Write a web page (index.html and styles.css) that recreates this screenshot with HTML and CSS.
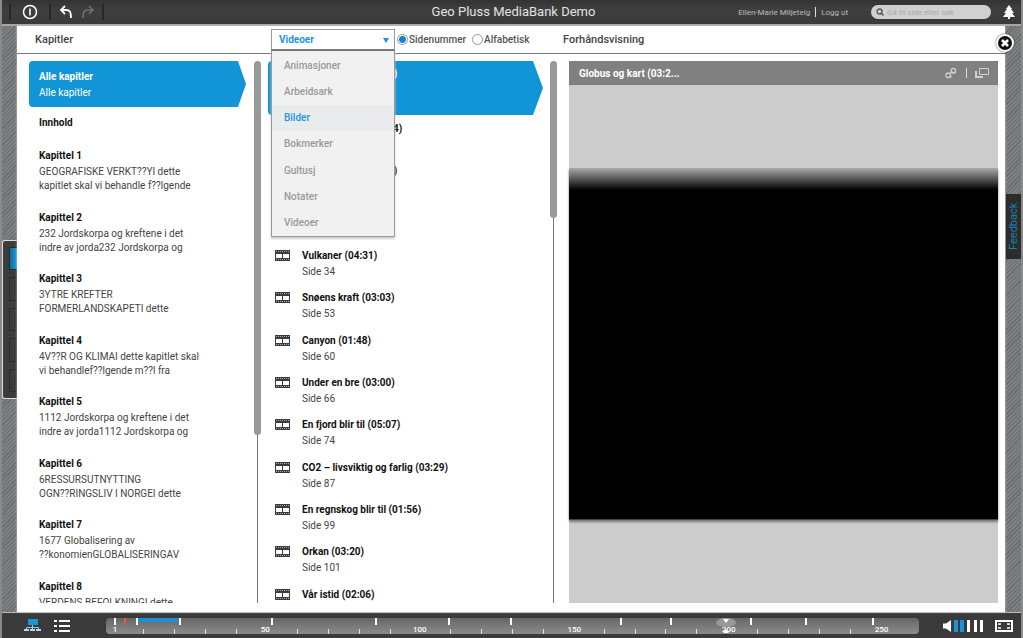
FILE: index.html
```html
<!DOCTYPE html>
<html lang="no">
<head>
<meta charset="utf-8">
<title>Geo Pluss MediaBank Demo</title>
<link rel="stylesheet" href="styles.css">
</head>
<body>
<svg class="defs" width="0" height="0" aria-hidden="true">
  <symbol id="film" viewBox="0 0 15 11">
    <path fill="#3c3c3c" fill-rule="evenodd" d="M0 0h15v11H0zM1 4v4h6V4zM8 4v4h6V4z"/>
    <path fill="#aaa" d="M1 1h1v1H1zM3 1h1v1H3zM5 1h1v1H5zM7 1h1v1H7zM9 1h1v1H9zM11 1h1v1h-1zM13 1h1v1h-1zM1 9h1v1H1zM3 9h1v1H3zM5 9h1v1H5zM7 9h1v1H7zM9 9h1v1H9zM11 9h1v1h-1zM13 9h1v1h-1z"/>
  </symbol>
</svg>
<div class="app">
  <header class="topbar">
    <div class="tools">
      <i class="sep"></i>
      <button class="icon-btn info" aria-label="Info"><svg width="16" height="16" viewBox="0 0 16 16" fill="none" stroke="#fff"><circle cx="8" cy="8" r="6.5" stroke-width="1.5"/><path d="M8 4.5v7" stroke-width="1.6"/></svg></button>
      <i class="sep"></i>
      <button class="icon-btn" aria-label="Angre"><svg width="14" height="14" viewBox="0 0 14 14" fill="none" stroke="#fff" stroke-width="1.8"><path d="M6 1 2 5l4 4M2 5h5c4 0 5 2 5 8"/></svg></button>
      <button class="icon-btn redo" aria-label="Gjenta"><svg width="14" height="14" viewBox="0 0 14 14" fill="none" stroke="#727272" stroke-width="1.5"><path d="m8 1 4 4-4 4M12 5H7c-4 0-5 2-5 8"/></svg></button>
      <i class="sep"></i>
    </div>
    <h1>Geo Pluss MediaBank Demo</h1>
    <div class="account">
      <span>Ellen-Marie Miljeteig</span><i class="bar"></i><a href="#">Logg ut</a>
      <label class="search"><svg width="8" height="8" viewBox="0 0 8 8" fill="none" stroke="#555"><circle cx="3.5" cy="3.5" r="2.5" stroke-width="1.4"/><path d="m5.5 5.5 2 2" stroke-width="1.5"/></svg><input type="text" placeholder="Gå til side eller søk" aria-label="Søk"></label>
      <svg class="tree" width="12" height="14" viewBox="0 0 12 14" fill="#fff"><path d="m6 0 3 4H8l3 4H9l3 4H7v2H5v-2H0l3-4H1l3-4H3z"/></svg>
    </div>
  </header>

  <main class="stage">
    <div class="rail"><i class="slot on"></i><i class="slot"></i><i class="slot"></i><i class="slot"></i><i class="slot"></i></div>
    <section class="dialog">
      <div class="head">
        <h2 class="h-left">Kapitler</h2>
        <div class="filters">
          <div class="picker">
            <select aria-label="Medietype"><option>Videoer</option></select>
            <i class="caret"></i>
            <ul class="menu">
              <li><button>Animasjoner</button></li>
              <li><button>Arbeidsark</button></li>
              <li><button class="active">Bilder</button></li>
              <li><button>Bokmerker</button></li>
              <li><button>Gultusj</button></li>
              <li><button>Notater</button></li>
              <li><button>Videoer</button></li>
            </ul>
          </div>
          <label class="sort"><input type="radio" name="sort" checked>Sidenummer</label>
          <label class="sort"><input type="radio" name="sort">Alfabetisk</label>
        </div>
        <h2 class="h-right">Forhåndsvisning</h2>
      </div>

      <div class="cols">
        <div class="col chapters-col">
          <div class="chapters">
            <article class="pick"><h3>Alle kapitler</h3><p>Alle kapitler</p></article>
            <article class="intro"><h3>Innhold</h3></article>
            <article><h3>Kapittel 1</h3><p>GEOGRAFISKE VERKT??YI dette<br>kapitlet skal vi behandle f??lgende</p></article>
            <article><h3>Kapittel 2</h3><p>232 Jordskorpa og kreftene i det<br>indre av jorda232 Jordskorpa og</p></article>
            <article><h3>Kapittel 3</h3><p>3YTRE KREFTER<br>FORMERLANDSKAPETI dette</p></article>
            <article><h3>Kapittel 4</h3><p>4V??R OG KLIMAI dette kapitlet skal<br>vi behandlef??lgende m??l fra</p></article>
            <article><h3>Kapittel 5</h3><p>1112 Jordskorpa og kreftene i det<br>indre av jorda1112 Jordskorpa og</p></article>
            <article><h3>Kapittel 6</h3><p>6RESSURSUTNYTTING<br>OGN??RINGSLIV I NORGEI dette</p></article>
            <article><h3>Kapittel 7</h3><p>1677 Globalisering av<br>??konomienGLOBALISERINGAV</p></article>
            <article><h3>Kapittel 8</h3><p>VERDENS BEFOLKNINGI dette</p></article>
          </div>
          <div class="scroll"><i class="thumb thumb-long"></i></div>
        </div>

        <div class="col videos-col">
          <div class="videos">
            <article class="pick"><svg width="15" height="11"><use href="#film"/></svg><div><h3>Globus og kart (03:2)</h3></div></article>
            <article><svg width="15" height="11"><use href="#film"/></svg><div><h3>Kontinentenes (03:04)</h3></div></article>
            <article><svg width="15" height="11"><use href="#film"/></svg><div><h3>Jordskjelv nå (02:30)</h3></div></article>
            <article><svg width="15" height="11"><use href="#film"/></svg><div><h3>Platene</h3></div></article>
            <article><svg width="15" height="11"><use href="#film"/></svg><div><h3>Vulkaner (04:31)</h3><p>Side 34</p></div></article>
            <article><svg width="15" height="11"><use href="#film"/></svg><div><h3>Snøens kraft (03:03)</h3><p>Side 53</p></div></article>
            <article><svg width="15" height="11"><use href="#film"/></svg><div><h3>Canyon (01:48)</h3><p>Side 60</p></div></article>
            <article><svg width="15" height="11"><use href="#film"/></svg><div><h3>Under en bre (03:00)</h3><p>Side 66</p></div></article>
            <article><svg width="15" height="11"><use href="#film"/></svg><div><h3>En fjord blir til (05:07)</h3><p>Side 74</p></div></article>
            <article><svg width="15" height="11"><use href="#film"/></svg><div><h3>CO2 – livsviktig og farlig (03:29)</h3><p>Side 87</p></div></article>
            <article><svg width="15" height="11"><use href="#film"/></svg><div><h3>En regnskog blir til (01:56)</h3><p>Side 99</p></div></article>
            <article><svg width="15" height="11"><use href="#film"/></svg><div><h3>Orkan (03:20)</h3><p>Side 101</p></div></article>
            <article><svg width="15" height="11"><use href="#film"/></svg><div><h3>Vår istid (02:06)</h3></div></article>
          </div>
          <div class="scroll"><i class="thumb thumb-short"></i></div>
        </div>

        <div class="preview">
          <div class="preview-head">
            <h3>Globus og kart (03:2...</h3>
            <button class="icon-btn" aria-label="Lenke"><svg width="12" height="12" viewBox="0 0 12 12" fill="none" stroke="#d0d0d0" stroke-width="1.3"><circle cx="3.2" cy="8.3" r="2.3"/><circle cx="8.3" cy="3.7" r="2.3"/><path d="m4.5 7 3-2.5M5 10.500l1.500-1.500M9 6.500l1.500-1"/></svg></button>
            <i class="bar"></i>
            <button class="icon-btn" aria-label="Åpne i vindu"><svg width="14" height="10" viewBox="0 0 14 10" fill="none" stroke="#d0d0d0"><path d="M4.500.5h9v6h-9z"/><path d="M1 3v6h7" stroke-width="2"/></svg></button>
          </div>
          <div class="screen"><div class="video"></div></div>
        </div>
      </div>
      <button class="close" aria-label="Lukk"><svg width="8" height="8" viewBox="0 0 8 8" stroke="#fff" stroke-width="2.600"><path d="m1 1 6 6M7 1 1 7"/></svg></button>
    </section>
    <button class="feedback">Feedback</button>
  </main>

  <footer class="bottombar">
    <button class="icon-btn" aria-label="Struktur"><svg width="17" height="13" viewBox="0 0 17 13"><path fill="#1996d8" d="M4 0h10v6H4z"/><path fill="none" stroke="#9ccbe6" d="M8.500 6v5M2.500 11V8.500h12V11"/><path fill="#b4d8ec" d="M0 10h5v2H0zM6 10h5v2H6zM12 10h5v2h-5z"/></svg></button>
    <button class="icon-btn list" aria-label="Liste"><svg width="16" height="12" viewBox="0 0 16 12" fill="#fff"><path d="M0 0h3v2H0zM5 0h11v2H5zM0 5h3v2H0zM5 5h11v2H5zM0 10h3v2H0zM5 10h11v2H5z"/></svg></button>
    <div class="timeline">
      <i class="range" style="left:3.7%;width:5.3%"></i>
      <i class="mark" style="left:1%"></i><i class="mark here" style="left:2.2%"></i>
      <i class="mark" style="left:3.7%"></i><i class="mark" style="left:9%"></i><i class="mark" style="left:20.3%"></i><i class="mark" style="left:33.1%"></i><i class="mark" style="left:42.1%"></i><i class="mark" style="left:49.7%"></i><i class="mark" style="left:63.2%"></i><i class="mark" style="left:69.4%"></i><i class="mark" style="left:79.2%"></i><i class="mark" style="left:86%"></i><i class="mark" style="left:94.2%"></i>
      <i class="tick" style="left:4.6%"></i><i class="tick" style="left:8.4%"></i><i class="tick" style="left:12.2%"></i><i class="tick" style="left:16%"></i>
      <i class="tick" style="left:23.5%"></i><i class="tick" style="left:27.3%"></i><i class="tick" style="left:31.1%"></i><i class="tick" style="left:34.9%"></i>
      <i class="tick" style="left:42.3%"></i><i class="tick" style="left:46.1%"></i><i class="tick" style="left:49.9%"></i><i class="tick" style="left:53.7%"></i>
      <i class="tick" style="left:61.3%"></i><i class="tick" style="left:65.1%"></i><i class="tick" style="left:68.8%"></i><i class="tick" style="left:72.6%"></i>
      <i class="tick" style="left:80.1%"></i><i class="tick" style="left:83.9%"></i><i class="tick" style="left:87.7%"></i><i class="tick" style="left:91.5%"></i>
      <svg class="handle" style="left:76.3%" width="20" height="16" viewBox="0 0 20 16"><ellipse cx="10" cy="4.500" rx="10" ry="4.500" fill="#999"/><path fill="#fff" d="M7 1h6l-3 4zM7 15h6l-3-4z"/></svg>
      <span class="num" style="left:1.1%">1</span><span class="num" style="left:19.6%">50</span><span class="num" style="left:38.6%">100</span><span class="num" style="left:57.6%">150</span><span class="num" style="left:76.6%">200</span><span class="num" style="left:95.4%">250</span>
    </div>
    <button class="icon-btn" aria-label="Volum"><svg width="41" height="12" viewBox="0 0 41 12"><path fill="#fff" d="M0 3.500h3L8 0v12L3 8.500H0zM24 0h3v12h-3zM31 0h3v12h-3zM37 0h3v12h-3z"/><path fill="#1996d8" d="M11 0h4v12h-4zM17 0h4v12h-4z"/></svg></button>
    <button class="icon-btn full" aria-label="Fullskjerm"><svg width="18" height="12" viewBox="0 0 18 12" fill="none" stroke="#fff"><path stroke-width="2" d="M1 1h16v10H1z"/><path stroke-width="1.500" d="M4 5V4h2M12 4h2v1M4 7v1h2M12 8h2V7"/></svg></button>
  </footer>
</div>
</body>
</html>
```
FILE: styles.css
```css
* { box-sizing: border-box; margin: 0; padding: 0; }
body { font-family: Roboto, "Liberation Sans", sans-serif; font-size: 10px; color: #333; background: #8a8a8a; }
button { border: 0; background: none; font: inherit; color: inherit; cursor: pointer; }
.defs { position: absolute; }
.app { display: flex; flex-direction: column; height: 100vh; padding: 0 2px; overflow: hidden; }
.icon-btn { display: flex; flex: none; }

.topbar { display: grid; grid-template-columns: 1fr auto 1fr; align-items: center; height: 26px; flex: none; background: linear-gradient(#333, #3f3f3f 40%, #3a3a3a); border-bottom: 2px solid #a6a6a6; }
.tools { display: flex; align-items: center; height: 100%; padding-left: 7px; }
.sep { width: 2px; height: 16px; background: #272727; }
.info { margin: 0 11px; }
.tools .sep + .icon-btn:not(.info) { margin-left: 8px; }
.redo { margin: 0 7px 0 8px; }
.topbar h1 { padding-left: 4px; font-size: 13px; line-height: 24px; font-weight: 400; color: #e2e2e2; }
.account { display: flex; align-items: center; justify-content: flex-end; padding-right: 6px; font-size: 8px; color: #bbb; white-space: nowrap; }
.account a { color: inherit; text-decoration: none; }
.bar { width: 1px; height: 10px; margin: 0 5px; background: #ddd; }
.search { display: flex; align-items: center; gap: 3px; width: 120px; height: 14px; margin: 0 12px 0 23px; padding: 0 5px; border-radius: 7px; background: #d0d0d0; }
.search svg { flex: none; }
.search input { width: 100%; border: 0; background: none; outline: 0; font: inherit; }
.search input::placeholder { color: #aaa; opacity: 1; }

.stage { position: relative; flex: 1; min-height: 0; display: flex; padding: 0 16px 0 15px; background: repeating-linear-gradient(135deg, #6a6c6e 0 1px, #7d7f81 1px 3px); }
.rail { position: absolute; left: 0; top: 214px; width: 15px; height: 159px; padding: 6px 0 6px 6px; display: flex; flex-direction: column; gap: 7px; background: #3c3c3c; border: 1px solid #ddd; border-right: 0; border-radius: 3px 0 0 3px; }
.slot { flex: 1; border: 1px solid #2b2b2b; border-right: 0; }
.slot.on { background: linear-gradient(90deg, #0d6ea5, #1c9be0); }
.feedback { position: absolute; right: 0; top: 168px; width: 15px; height: 65px; writing-mode: vertical-rl; transform: rotate(180deg); background: #2c2c2c; color: #1b7eae; font-size: 11px; line-height: 15px; }

.dialog { position: relative; flex: 1; min-width: 0; display: flex; flex-direction: column; background: #fff; box-shadow: 0 0 2px #ccc; }
.head, .cols { display: grid; grid-template-columns: 247px 297px 1fr; }
.head { height: 28px; flex: none; align-items: center; border-bottom: 1px solid #777; }
.head h2 { font-size: 11px; line-height: 14px; font-weight: 500; color: #444; }
.h-left { padding-left: 18px; }
.h-right { padding-left: 2px; }
.filters { display: flex; align-items: center; gap: 6px; padding-left: 7px; }
.picker { position: relative; width: 124px; flex: none; margin-right: -4px; }
.picker select { display: block; width: 100%; height: 22px; padding-left: 7px; appearance: none; border: 1px solid #999; border-bottom: 2px solid #777; background: #fff; font: 700 10px Roboto, sans-serif; color: #1996e8; outline: 0; }
.caret { position: absolute; right: 6px; top: 9px; border: 3px solid transparent; border-top: 5px solid #1996d8; pointer-events: none; }
.menu { position: absolute; z-index: 2; top: 22px; left: 0; right: 0; height: 186px; padding-top: 2px; display: grid; grid-template-rows: repeat(7, 1fr); list-style: none; background: #f1f1f1; border: 1px solid #999; border-top: 0; box-shadow: 0 2px 2px #ccc; }
.menu button { width: 100%; height: 100%; padding-left: 12px; text-align: left; font-weight: 500; color: #999; }
.menu .active { background: #e9ebec; color: #1996e8; }
.sort { display: flex; align-items: center; gap: 1px; font-size: 10px; font-weight: 500; color: #555; }
.sort input { appearance: none; width: 11px; height: 11px; border: 1px solid #999; border-radius: 50%; background: #fff; }
.sort input:checked { background: radial-gradient(circle, #1482cf 0 3px, #fff 4px); }

.cols { flex: 1; min-height: 0; padding: 7px 0 9px; grid-template-rows: minmax(0, 1fr); }
.col { display: flex; min-width: 0; }
.chapters-col { gap: 8px; padding: 0 3px 0 12px; }
.videos-col { gap: 7px; padding: 0 4px; }
.chapters, .videos { flex: 1; overflow: hidden; }
.col h3 { font-size: 10px; line-height: 16px; font-weight: 700; color: #111; white-space: nowrap; }
.col p { line-height: 14px; color: #444; white-space: nowrap; }
.col .pick { background: #1295d6; border-radius: 4px; }
.col .pick h3, .col .pick p { color: #fff; }
.chapters p { padding-top: 1px; }
.chapters article { height: 62px; padding-left: 10px; }
.chapters article:nth-child(even) { height: 61px; }
.chapters .pick { height: 46px; padding-top: 8px; clip-path: polygon(0 0, calc(100% - 8px) 0, 100% 50%, calc(100% - 8px) 100%, 0 100%); }
.chapters article.intro { height: 41px; padding-top: 8px; }
.videos article { display: flex; gap: 12px; height: 42px; padding-left: 7px; }
.videos article:nth-child(3n) { height: 43px; }
.videos svg { flex: none; margin-top: 2px; }
.videos p { line-height: 16px; }
.videos .pick { height: 54px; margin-bottom: 6px; padding-top: 5px; clip-path: polygon(0 0, calc(100% - 10px) 0, 100% 50%, calc(100% - 10px) 100%, 0 100%); }
.scroll { flex: none; width: 7px; background: linear-gradient(#777, #777) center / 1px 100% no-repeat; }
.thumb { display: block; border-radius: 4px; background: #999; }
.thumb-long { height: 69%; }
.thumb-short { height: 29%; }

.preview { display: flex; flex-direction: column; margin: 0 7px 0 8px; }
.preview-head { display: flex; align-items: center; flex: none; height: 24px; padding: 0 9px 0 10px; background: #808080; color: #fff; }
.preview-head h3 { flex: 1; font-size: 10px; font-weight: 700; }
.preview-head .bar { margin: 0 8px 0 9px; }
.screen { flex: 1; display: flex; align-items: center; background: #ccc; }
.video { width: 100%; height: 68%; background: linear-gradient(#aaa, #000 22px); border-bottom: 1px solid #444; box-shadow: 0 2px 2px #777; }
.close { position: absolute; right: -9px; top: 8px; width: 18px; height: 18px; display: grid; place-items: center; border: 2px solid #fff; border-radius: 50%; background: #111; box-shadow: 0 0 2px #333; }

.bottombar { display: flex; align-items: center; flex: none; height: 26px; padding: 0 8px 0 22px; background: #3a3a3a; border-top: 1px solid #bbb; }
.list { margin: 0 36px 0 13px; }
.full { margin-left: 11px; }
.timeline { position: relative; flex: 1; height: 16px; margin-right: 24px; border-radius: 4px; background: linear-gradient(#666, #8b8b8b); }
.range, .mark, .tick, .handle, .num { position: absolute; }
.range { top: 0; height: 4px; background: #1c8fd0; }
.mark { top: 0; width: 2px; height: 7px; background: #fff; }
.mark.here { background: #e06020; }
.tick { bottom: 0; width: 1px; height: 5px; background: #ddd; }
.handle { top: 0; transform: translateX(-50%); }
.num { bottom: -1px; transform: translateX(-50%); font-size: 8px; line-height: 11px; font-weight: 500; color: #fff; }
```
